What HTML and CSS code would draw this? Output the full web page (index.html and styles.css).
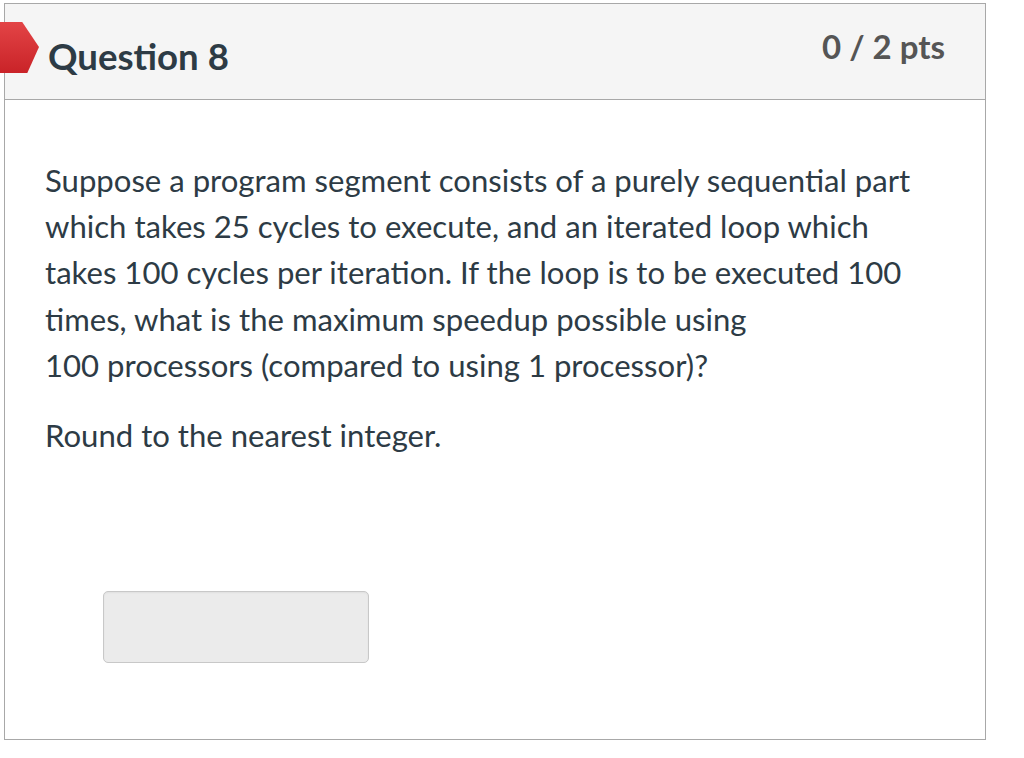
FILE: index.html
```html
<!DOCTYPE html>
<html>
<head>
<meta charset="utf-8">
<link rel="stylesheet" href="styles.css">
</head>
<body>
<div class="question">
  <div class="marker"></div>
  <div class="header">
    <div class="name">Question 8</div>
    <div class="points">0 / 2 pts</div>
  </div>
  <div class="content">
    <p>Suppose a program segment consists of a purely sequential part which takes 25 cycles to execute, and an iterated loop which takes 100 cycles per iteration. If the loop is to be executed 100 times, what is the maximum speedup possible using<br>100 processors (compared to using 1 processor)?</p>
    <p>Round to the nearest integer.</p>
    <div class="answer"></div>
  </div>
</div>
</body>
</html>
```
FILE: styles.css
```css
html, body {
  margin: 0;
  padding: 0;
  background: #fff;
  font-family: Lato, "Open Sans", sans-serif;
}
.question {
  position: relative;
  margin: 3px 0 0 4px;
  width: 980px;
  height: 735px;
  border: 1px solid #a8a8a8;
  box-shadow: 0 2px 0 #d4d4d4;
}
.marker {
  position: absolute;
  left: -5px;
  top: 18px;
  width: 39px;
  height: 51px;
  background: linear-gradient(#e34446, #c92328);
  clip-path: polygon(0 0, 57% 0, 100% 49%, 70% 100%, 0 100%);
}
.header {
  display: flex;
  justify-content: space-between;
  align-items: flex-start;
  height: 95px;
  background: #f5f5f5;
  border-bottom: 1px solid #a8a8a8;
}
.name {
  margin: 32px 0 0 43px;
  font-size: 36.6px;
  font-weight: bold;
  color: #2d3b45;
  line-height: 40px;
}
.points {
  margin: 22px 40px 0 0;
  font-size: 33px;
  font-weight: bold;
  color: #555;
  line-height: 40px;
}
.content {
  padding: 57px 55px 0 40px;
  color: #2d3b45;
  font-size: 31.1px;
  line-height: 46.2px;
}
.content p {
  margin: 0 0 24px;
}
.answer {
  margin: 133px 0 0 58px;
  width: 264px;
  height: 70px;
  background: #ebebeb;
  border: 1px solid #c8c8c8;
  border-radius: 5px;
  box-shadow: inset 0 1px 2px rgba(0,0,0,0.05);
}
```
